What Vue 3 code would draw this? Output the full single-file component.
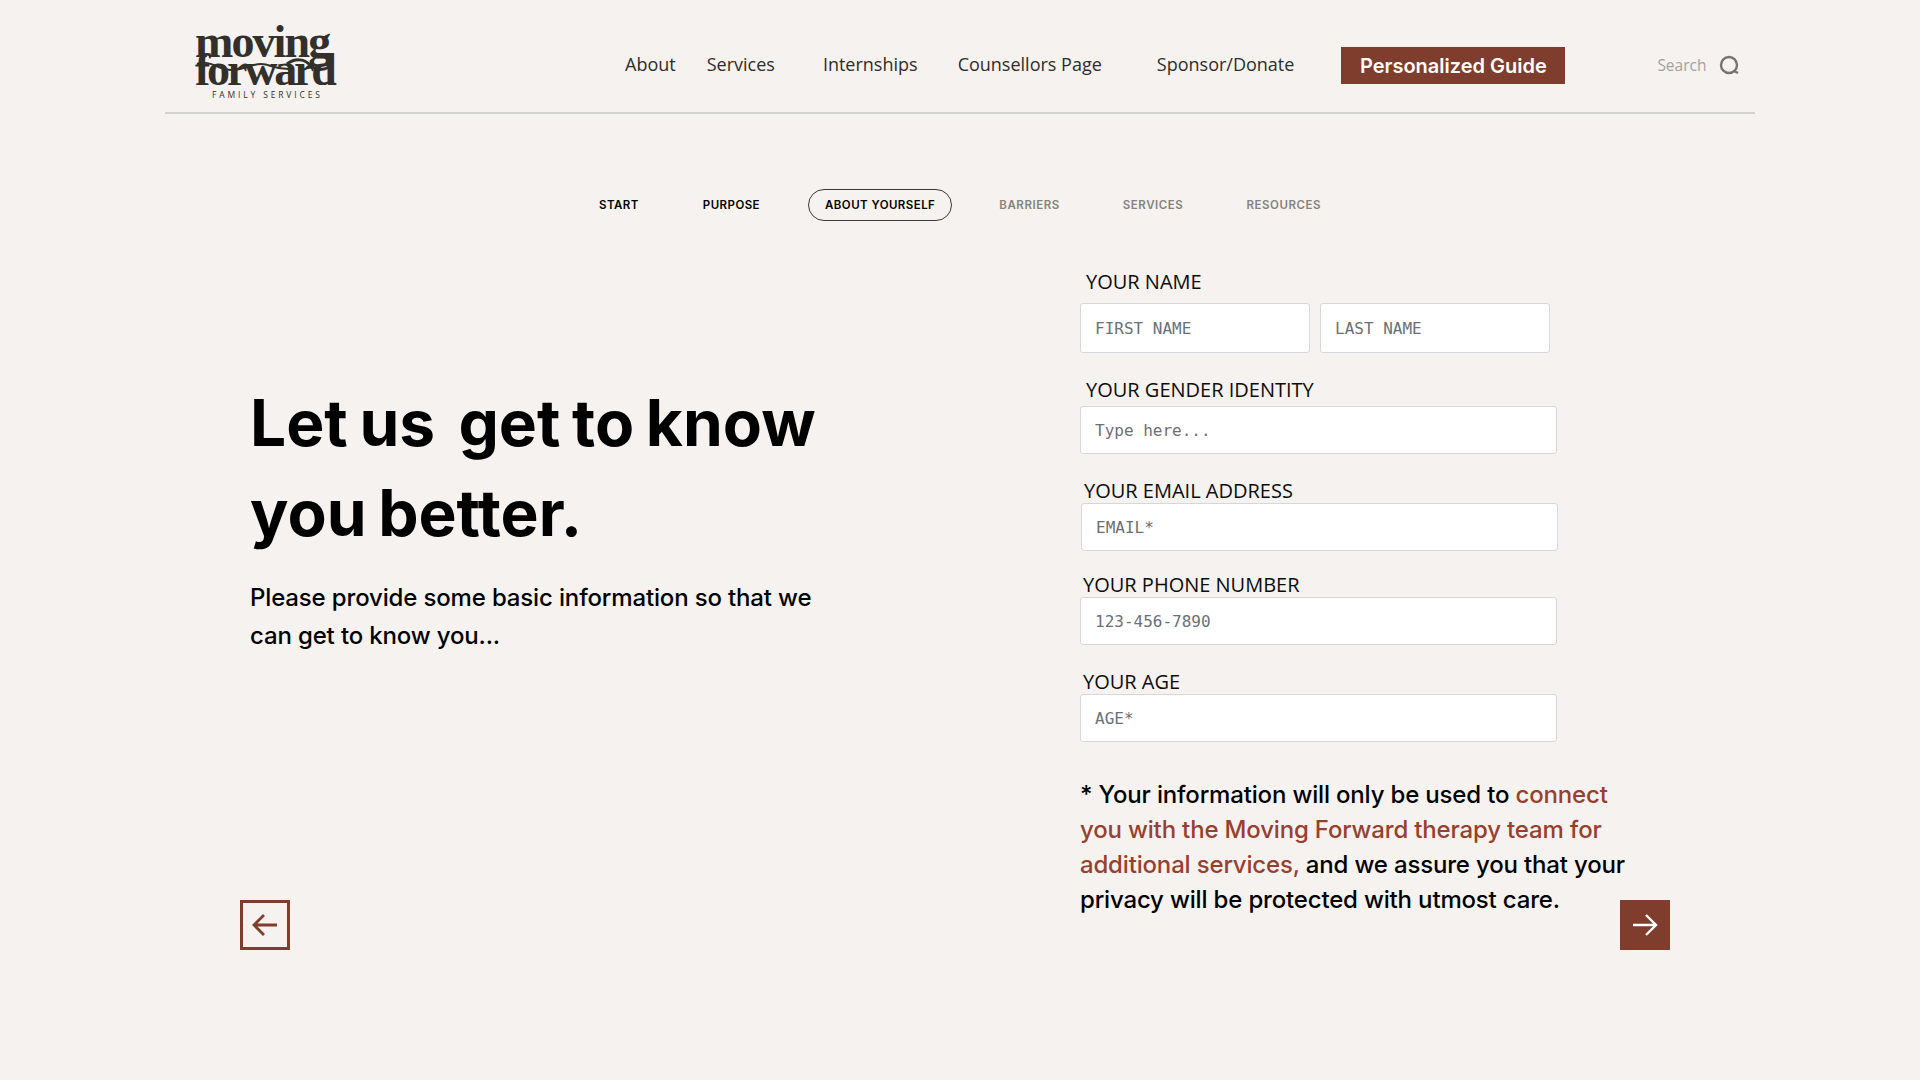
<template>
  <div class="page">
    <header class="site-header">
      <a class="logo">
        <span class="logo-moving">moving</span>
        <span class="logo-forward">forward</span>
        <span class="logo-sub">FAMILY SERVICES</span>
        <svg class="logo-swash" width="150" height="70" viewBox="0 0 150 70" fill="none">
          <path d="M2 30c14-5 22 7 36 6s18-6 28-6 14 6 30 5" stroke="#332f2b" stroke-width="2" />
          <path d="M92 30c8-6 17-5 22 0 5 6 13 7 20 3" stroke="#332f2b" stroke-width="3" />
        </svg>
      </a>
      <nav class="nav">
        <a v-for="item in navItems" :key="item.label" class="nav-link" :class="item.cls">{{ item.label }}</a>
        <a class="guide-btn">Personalized Guide</a>
      </nav>
      <div class="search">
        <span>Search</span>
        <svg width="21" height="20" viewBox="0 0 21 20" fill="none" stroke="#77736f" stroke-width="2.4">
          <circle cx="10" cy="10" r="8" />
          <path d="M15 16l4 2" />
        </svg>
      </div>
    </header>

    <div class="steps">
      <span
        v-for="step in steps"
        :key="step.label"
        class="step"
        :class="{ active: step.active, todo: step.todo }"
      >{{ step.label }}</span>
    </div>

    <main class="content">
      <section class="intro">
        <div class="intro-text">
          <h1>Let us&nbsp; get to know<br />you better.</h1>
          <p>Please provide some basic information so that we can get to know you...</p>
        </div>
        <button class="arrow-btn prev" aria-label="Back">
          <svg width="28" height="24" viewBox="0 0 28 24" fill="none" stroke="#7f3d2d" stroke-width="2.8">
            <path d="M26 12H3M13 2L3 12l10 10" />
          </svg>
        </button>
      </section>

      <section class="form-col">
        <form class="form" @submit.prevent>
          <label class="field-label name-label">YOUR NAME</label>
          <div class="name-row">
            <input placeholder="FIRST NAME" />
            <input placeholder="LAST NAME" />
          </div>
          <label class="field-label gender-label">YOUR GENDER IDENTITY</label>
          <input class="wide" placeholder="Type here..." />
          <label class="field-label email-label">YOUR EMAIL ADDRESS</label>
          <input class="wide email" placeholder="EMAIL*" />
          <label class="field-label phone-label">YOUR PHONE NUMBER</label>
          <input class="wide" placeholder="123-456-7890" />
          <label class="field-label age-label">YOUR AGE</label>
          <input class="wide" placeholder="AGE*" />
        </form>
        <div class="note-row">
          <p class="note">
            * Your information will only be used to
            <span class="accent">connect you with the Moving Forward therapy team for additional services,</span>
            and we assure you that your privacy will be protected with utmost care.
          </p>
          <button class="arrow-btn next" aria-label="Next">
            <svg width="28" height="24" viewBox="0 0 28 24" fill="none" stroke="#fff" stroke-width="2.4">
              <path d="M2 12h23M15 2l10 10-10 10" />
            </svg>
          </button>
        </div>
      </section>
    </main>
  </div>
</template>

<script setup>
const navItems = [
  { label: 'About', cls: 'n-about' },
  { label: 'Services', cls: 'n-services' },
  { label: 'Internships', cls: 'n-intern' },
  { label: 'Counsellors Page', cls: 'n-couns' },
  { label: 'Sponsor/Donate', cls: 'n-sponsor' }
]

const steps = [
  { label: 'START' },
  { label: 'PURPOSE' },
  { label: 'ABOUT YOURSELF', active: true },
  { label: 'BARRIERS', todo: true },
  { label: 'SERVICES', todo: true },
  { label: 'RESOURCES', todo: true }
]
</script>

<style>
html,
body {
  background: #f5f2ef;
}
</style>

<style scoped>
.page {
  height: 1080px;
  overflow: hidden;
  background: #f5f2ef;
  font-family: Inter, "Open Sans", sans-serif;
  color: #000;
}

.site-header {
  display: flex;
  align-items: flex-start;
  width: 1590px;
  height: 114px;
  margin-left: 165px;
  border-bottom: 2px solid #d3d3d2;
  box-sizing: border-box;
}

.logo {
  position: relative;
  display: flex;
  flex-direction: column;
  width: 150px;
  margin: 22px 0 0 30px;
  color: #332f2b;
  font-family: "Liberation Serif", serif;
  font-weight: 700;
  line-height: 1;
}

.logo-moving {
  height: 29px;
  font-size: 46px;
  line-height: 40px;
  letter-spacing: -1.9px;
}

.logo-forward {
  height: 35px;
  font-size: 46px;
  line-height: 38px;
  letter-spacing: -3.2px;
}

.logo-sub {
  margin: 3px 0 0 17px;
  font-family: "Open Sans", sans-serif;
  font-size: 8.5px;
  font-weight: 400;
  letter-spacing: 2.85px;
  line-height: 11px;
  white-space: nowrap;
}

.logo-swash {
  position: absolute;
  left: 0;
  top: 12px;
}

.nav {
  display: flex;
  align-items: center;
  height: 37px;
  margin: 47px 0 0 0;
}

.nav-link {
  font-family: "Open Sans", sans-serif;
  font-size: 18px;
  color: #2f2d2b;
  white-space: nowrap;
  margin-top: -3px;
}

.n-about { margin-left: 280px; }
.n-services { margin-left: 31px; }
.n-intern { margin-left: 48px; }
.n-couns { margin-left: 40px; }
.n-sponsor { margin-left: 55px; }

.guide-btn {
  display: flex;
  align-items: center;
  justify-content: center;
  width: 224px;
  height: 37px;
  margin-left: 47px;
  background: #7f3d2d;
  color: #fff;
  font-size: 20px;
  font-weight: 600;
}

.search {
  display: flex;
  align-items: center;
  gap: 13px;
  margin: 55px 0 0 92px;
  color: #a5a19d;
  font-family: "Open Sans", sans-serif;
  font-size: 15.5px;
  line-height: 20px;
}

.steps {
  display: flex;
  align-items: center;
  height: 32px;
  margin: 75px 0 0 599px;
  font-size: 11.5px;
  font-weight: 600;
  letter-spacing: 0.45px;
}

.step {
  margin-right: 64px;
  white-space: nowrap;
}

.step.active {
  display: flex;
  align-items: center;
  height: 32px;
  margin: 0 47px 0 -16px;
  padding: 0 16px;
  border: 1px solid #3c3a38;
  border-radius: 16px;
  box-sizing: border-box;
}

.step.todo {
  margin-right: 63px;
  color: #85827f;
  letter-spacing: 0.55px;
}

.content {
  display: flex;
  height: 730px;
  padding-top: 1px;
}

.intro {
  display: flex;
  flex-direction: column;
  width: 840px;
  height: 729px;
  margin-left: 240px;
}

.intro-text {
  padding: 156px 0 0 10px;
  height: 678px;
  box-sizing: border-box;
}

h1 {
  margin: 0;
  font-size: 64px;
  font-weight: 700;
  line-height: 90px;
  word-spacing: -3.5px;
}

.intro p {
  width: 590px;
  margin: 21px 0 0;
  font-size: 24px;
  font-weight: 500;
  line-height: 38px;
  letter-spacing: -0.15px;
}

.arrow-btn {
  display: flex;
  align-items: center;
  justify-content: center;
  width: 50px;
  height: 50px;
  padding: 0;
  box-sizing: border-box;
  border: 0;
}

.prev {
  background: transparent;
  border: 3px solid #7f3d2d;
}

.next {
  flex-shrink: 0;
  margin: 123px 0 0 -10px;
  background: #7f3d2d;
}

.form-col {
  width: 600px;
  padding-top: 47px;
}

.form {
  display: flex;
  flex-direction: column;
  width: 478px;
}

.field-label {
  display: block;
  font-family: "Open Sans", sans-serif;
  font-size: 20px;
  line-height: 26px;
  color: #0c0c0c;
  white-space: nowrap;
}

.name-label { margin: 0 0 8px 6px; }
.gender-label { margin: 24px 0 3px 6px; }
.email-label { margin: 24px 0 -1px 4px; }
.phone-label { margin: 21px 0 -1px 3px; }
.age-label { margin: 24px 0 -1px 3px; }

.name-row {
  display: flex;
  gap: 10px;
}

input {
  display: block;
  width: 230px;
  height: 50px;
  padding: 0 14px;
  box-sizing: border-box;
  background: #fff;
  border: 1px solid #d5d7dc;
  border-radius: 3px;
  font-family: "DejaVu Sans Mono", monospace;
  font-size: 16px;
  color: #333;
  outline: none;
}

input.wide {
  width: 477px;
  height: 48px;
}

input.email {
  margin-left: 1px;
}

input::placeholder {
  color: #6b7078;
  opacity: 1;
}

.note-row {
  display: flex;
  margin-top: 35px;
}

.note {
  width: 550px;
  margin: 0;
  font-size: 24px;
  font-weight: 500;
  line-height: 35px;
  letter-spacing: -0.17px;
}

.accent {
  color: #98402f;
}
</style>
